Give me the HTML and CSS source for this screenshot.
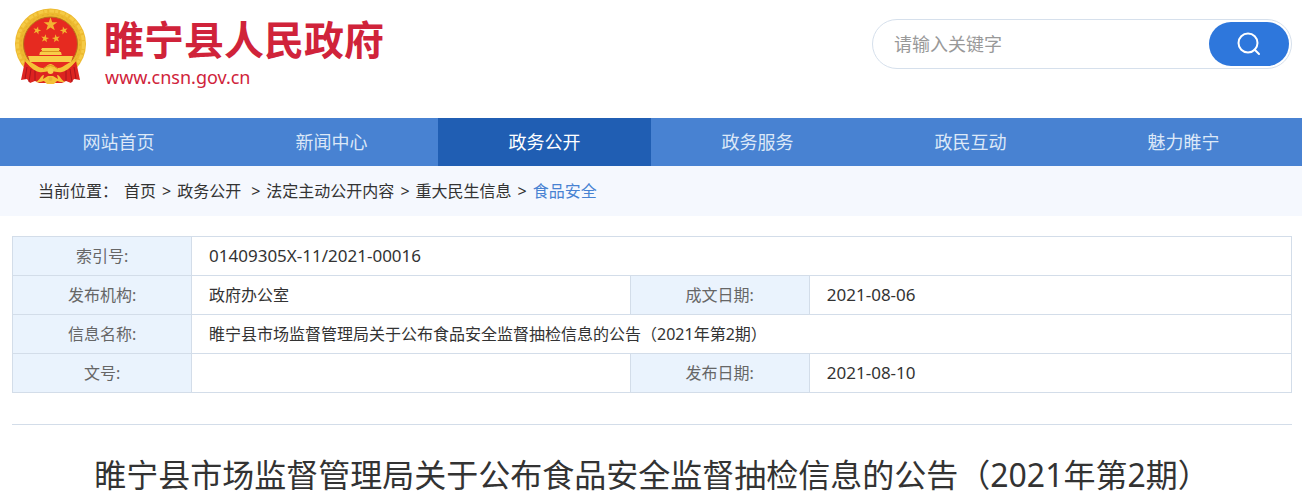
FILE: index.html
```html
<!DOCTYPE html>
<html lang="zh-CN">
<head>
  <meta charset="UTF-8">
  <meta name="viewport" content="width=device-width, initial-scale=1.0">
  <title>睢宁县市场监督管理局关于公布食品安全监督抽检信息的公告（2021年第2期）</title>
  <link rel="stylesheet" href="styles.css">
</head>
<body>
  <header class="header">
    <a class="logo" href="#">
      <svg class="emblem" viewBox="0 0 74 78" aria-hidden="true">
        <defs>
          <polygon id="star" points="0,-10 2.4,-3.1 9.5,-3.1 3.8,1.2 5.9,8.1 0,4 -5.9,8.1 -3.8,1.2 -9.5,-3.1 -2.4,-3.1"/>
        </defs>
        <circle cx="36.500" cy="36" r="35.500" fill="#edb92f"/>
        <circle cx="36.500" cy="36" r="33" fill="none" stroke="#f5ca45" stroke-width="3" stroke-dasharray="5 1 3 2"/>
        <circle cx="36.500" cy="36" r="29.500" fill="none" stroke="#e3ab2a" stroke-width="1" stroke-dasharray="2 3"/>
        <circle cx="36.500" cy="36" r="27" fill="#e62a20" stroke="#b9701c" stroke-width="1"/>
        <g fill="#f3b431">
          <use href="#star" transform="translate(36.500 16.500) scale(.72)"/>
          <use href="#star" transform="translate(23 22.500) scale(.42) rotate(15)"/>
          <use href="#star" transform="translate(50 22.500) scale(.42) rotate(-15)"/>
          <use href="#star" transform="translate(31 30.500) scale(.42) rotate(10)"/>
          <use href="#star" transform="translate(42 30.500) scale(.42) rotate(-10)"/>
        </g>
        <path d="M28 40h17l1 2h-1v2h2l1 4H25l1-4h2v-2h-1zM14 48h45l-2 6H16z" fill="#f8cd48"/>
        <path d="M27 43.500h19" fill="none" stroke="#d9951f" stroke-width="1"/>
        <path d="M25 47.500h23" fill="none" stroke="#e62a20" stroke-width="1"/>
        <path d="M11 53c5 6 9 8 15 9h21c6-1 10-3 15-9l4 19-6-1-3 4-5-2-4 2H25l-4-2-5 2-3-4-6 1z" fill="#dd2420"/>
        <path d="M13 59l-2 12M17 61l-2 13M21 62v11M52 62v11M56 61l2 13M60 59l2 12" stroke="#a9151c" stroke-width="1"/>
        <path d="M11 53c8 0 12 7 18 7 3 0 4-4 7.500-4s4.500 4 7.500 4c6 0 10-7 18-7-4 5-9 10-14 11-4 1-7-1-11.500-1s-7.500 2-11.500 1c-5-1-10-6-14-11z" fill="#f5c237"/>
        <path d="M22 74c4-2 5-7 8-7l-1 4 5-3h5l5 3-1-4c3 0 4 5 8 7-4 1-6-1-8-1l-3 3h-7l-3-3c-2 0-4 2-8 1z" fill="#f5c237"/>
        <path d="M29 61q7.500-7 15 0" fill="none" stroke="#d9951f" stroke-width="1"/>
        <circle cx="36.500" cy="63" r="3" fill="#f8cf4a"/>
        <circle cx="36.500" cy="71" r="2" fill="#e8b035"/>
      </svg>
      <span class="logo-text">
        <strong class="site-name">睢宁县人民政府</strong>
        <span class="site-url">www.cnsn.gov.cn</span>
      </span>
    </a>
    <form class="search">
      <input class="search-input" type="text" placeholder="请输入关键字" aria-label="请输入关键字">
      <button class="search-btn" type="button" aria-label="搜索">
        <svg class="search-icon" viewBox="0 0 24 24" aria-hidden="true">
          <circle cx="11" cy="11" r="9.500"/>
          <path d="M17.500 17.500l4.500 4.500"/>
        </svg>
      </button>
    </form>
  </header>

  <nav class="nav">
    <a href="#">网站首页</a>
    <a href="#">新闻中心</a>
    <a class="active" href="#">政务公开</a>
    <a href="#">政务服务</a>
    <a href="#">政民互动</a>
    <a href="#">魅力睢宁</a>
  </nav>

  <div class="crumbs">
    <span>当前位置：</span>
    <a href="#">首页</a>
    <span>&gt;</span>
    <a class="channel" href="#">政务公开</a>
    <span>&gt;</span>
    <a href="#">法定主动公开内容</a>
    <span>&gt;</span>
    <a href="#">重大民生信息</a>
    <span>&gt;</span>
    <a class="current" href="#">食品安全</a>
  </div>

  <main class="content">
    <table class="info">
      <colgroup>
        <col class="col-label">
        <col class="col-value">
        <col class="col-label">
        <col>
      </colgroup>
      <tr>
        <th scope="row">索引号:</th>
        <td class="num" colspan="3">01409305X-11/2021-00016</td>
      </tr>
      <tr>
        <th scope="row">发布机构:</th>
        <td>政府办公室</td>
        <th scope="row">成文日期:</th>
        <td class="num">2021-08-06</td>
      </tr>
      <tr>
        <th scope="row">信息名称:</th>
        <td colspan="3">睢宁县市场监督管理局关于公布食品安全监督抽检信息的公告（2021年第2期）</td>
      </tr>
      <tr>
        <th scope="row">文号:</th>
        <td></td>
        <th scope="row">发布日期:</th>
        <td class="num">2021-08-10</td>
      </tr>
    </table>

    <h1 class="title">睢宁县市场监督管理局关于公布食品安全监督抽检信息的公告（2021年第2期）</h1>
  </main>
</body>
</html>
```

FILE: styles.css
```css
* { margin: 0; padding: 0; box-sizing: border-box; }
body { background: #fff; color: #333; font: 16px/24px "Noto Sans", "Noto Sans CJK SC", sans-serif; }
a { color: inherit; text-decoration: none; }

.header { display: flex; justify-content: space-between; align-items: flex-start; padding: 8px 10px 30px 14px; }
.logo { display: flex; gap: 16px; color: #d0233a; }
.emblem { width: 74px; height: 78px; }
.logo-text { display: flex; flex-direction: column; padding-top: 2px; }
.site-name { font-family: "Noto Sans CJK SC", sans-serif; font-size: 40px; line-height: 56px; font-weight: 700; }
.site-url { padding-left: 1px; font-size: 18px; line-height: 22px; }

.search {
  display: flex; width: 420px; height: 50px; margin-top: 11px; padding: 2px;
  border: 1px solid #d6e0ec; border-radius: 25px;
}
.search-input {
  flex: 1; min-width: 0; padding-left: 19px; border: none; outline: none;
  background: transparent; color: #333; font: inherit; font-size: 18px;
}
.search-input::placeholder { color: #999; }
.search-btn {
  display: flex; align-items: center; justify-content: center; width: 80px;
  border: none; border-radius: 22px; background: #2e77dc; cursor: pointer;
}
.search-icon { width: 24px; height: 24px; fill: none; stroke: #fff; stroke-width: 2; stroke-linecap: round; }

.nav { display: flex; padding: 0 12px; background: #4882d2; }
.nav a { flex: 1; color: #dce8f8; font-size: 18px; line-height: 48px; text-align: center; }
.nav a.active { background: #205eb3; color: #fff; }

.crumbs { display: flex; gap: 6px; padding-left: 38px; background: #f5f8fe; line-height: 50px; }
.crumbs .channel { padding-right: 4px; }
.crumbs .current { color: #4882d2; }

.content { padding: 20px 10px 0 12px; }
.info { width: 100%; border-collapse: collapse; table-layout: fixed; }
.col-label { width: 14%; }
.col-value { width: 34.3%; }
.info th, .info td { height: 39px; border: 1px solid #d3dde9; font-weight: 400; }
.info th { background: #eaf3fd; color: #666; text-align: center; }
.info td { padding-left: 17px; text-align: left; }
.info .num { font-size: 17px; }

.title {
  margin-top: 31px; padding: 26px 0; border-top: 1px solid #d3dde9;
  font-size: 32px; line-height: 48px; font-weight: 400; text-align: center;
}
```
